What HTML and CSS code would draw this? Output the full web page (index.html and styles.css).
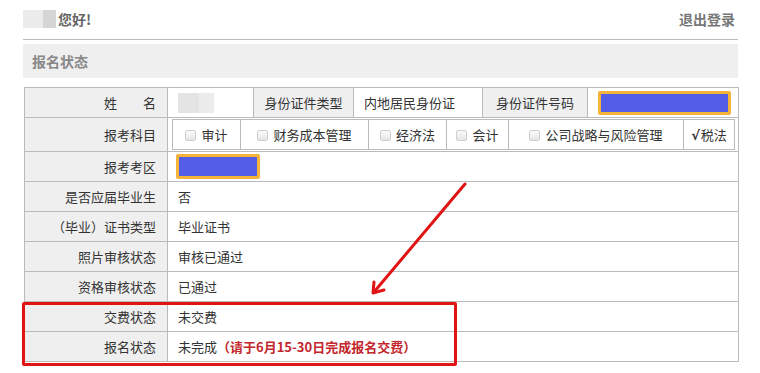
FILE: index.html
```html
<!DOCTYPE html>
<html lang="zh-CN">
<head>
<meta charset="utf-8">
<title>报名状态</title>
<link rel="stylesheet" href="styles.css">
</head>
<body>
<div class="page">
  <div class="top">
    <div class="greet"><span class="blur-a"></span><span class="blur-b"></span><span class="hello">您好!</span></div>
    <a class="logout">退出登录</a>
  </div>
  <div class="section-title">报名状态</div>
  <table class="info">
    <colgroup>
      <col class="c1"><col class="c2"><col class="c3"><col class="c4"><col class="c5"><col class="c6">
    </colgroup>
    <tr class="r1">
      <td class="lab">姓&emsp;&emsp;名</td>
      <td class="val"><span class="nameblur"><span></span><span></span></span></td>
      <td class="sub">身份证件类型</td>
      <td class="val">内地居民身份证</td>
      <td class="sub">身份证件号码</td>
      <td class="val idcell"><span class="mask mask-id"></span></td>
    </tr>
    <tr class="r2">
      <td class="lab">报考科目</td>
      <td class="nest" colspan="5">
        <table class="subjects">
          <colgroup>
            <col class="s1"><col class="s2"><col class="s3"><col class="s4"><col class="s5"><col class="s6">
          </colgroup>
          <tr>
            <td><span class="cb"></span>审计</td>
            <td><span class="cb"></span>财务成本管理</td>
            <td><span class="cb"></span>经济法</td>
            <td><span class="cb"></span>会计</td>
            <td><span class="cb"></span>公司战略与风险管理</td>
            <td><span class="tick">√</span>税法</td>
          </tr>
        </table>
      </td>
    </tr>
    <tr>
      <td class="lab">报考考区</td>
      <td class="val" colspan="5"><span class="mask mask-area"></span></td>
    </tr>
    <tr>
      <td class="lab">是否应届毕业生</td>
      <td class="val" colspan="5">否</td>
    </tr>
    <tr>
      <td class="lab">（毕业）证书类型</td>
      <td class="val" colspan="5">毕业证书</td>
    </tr>
    <tr>
      <td class="lab">照片审核状态</td>
      <td class="val" colspan="5">审核已通过</td>
    </tr>
    <tr>
      <td class="lab">资格审核状态</td>
      <td class="val" colspan="5">已通过</td>
    </tr>
    <tr>
      <td class="lab">交费状态</td>
      <td class="val" colspan="5">未交费</td>
    </tr>
    <tr>
      <td class="lab">报名状态</td>
      <td class="val" colspan="5">未完成<span class="warn">（请于6月15-30日完成报名交费）</span></td>
    </tr>
  </table>
</div>
<div class="highlight"></div>
<svg class="arrow" width="760" height="373" viewBox="0 0 760 373">
  <line x1="465" y1="184" x2="374" y2="292" stroke="#e01414" stroke-width="3" stroke-linecap="round"/>
  <polyline points="374,282 373,293 384,290" fill="none" stroke="#e01414" stroke-width="3" stroke-linecap="round" stroke-linejoin="round"/>
</svg>
</body>
</html>
```
FILE: styles.css
```css
* { box-sizing: border-box; }
html, body { margin: 0; padding: 0; background: #fff; }
body {
  position: relative;
  width: 760px;
  height: 373px;
  overflow: hidden;
  font-family: "Noto Sans CJK SC", "Microsoft YaHei", sans-serif;
  font-size: 13px;
  color: #333;
}
.page { padding: 0 22px 0 23px; }
.top {
  height: 40px;
  display: flex;
  align-items: center;
  justify-content: space-between;
  border-bottom: 1px solid #bcbcbc;
  padding-bottom: 1px;
}
.greet { display: flex; align-items: center; }
.blur-a { display: inline-block; width: 20px; height: 18px; background: #ececec; }
.blur-b { display: inline-block; width: 13px; height: 18px; background: #d6d6d6; }
.hello { margin-left: 2px; font-weight: bold; color: #666; font-size: 14px; }
.logout { font-weight: bold; color: #777; font-size: 14px; margin-right: 3px; }
.section-title {
  margin-top: 4px;
  height: 34px;
  line-height: 34px;
  background: #efefef;
  padding-left: 9px;
  color: #888;
  font-weight: bold;
  font-size: 14px;
}
.info {
  margin-top: 9px;
  margin-left: 1px;
  width: 714px;
  border-collapse: collapse;
  table-layout: fixed;
}
.c1 { width: 143px; } .c2 { width: 86px; } .c3 { width: 100px; }
.c4 { width: 129px; } .c5 { width: 105px; } .c6 { width: 151px; }
.info > tbody > tr > td, .info > tr > td {
  border: 1px solid #bbb;
  height: 30px;
  padding: 0;
  white-space: nowrap;
}
.info .r1 > td { height: 30px; }
.lab {
  background: #efefef;
  text-align: right;
  padding-right: 11px !important;
}
.sub { background: #efefef; text-align: center; }
.val { padding-left: 10px !important; }
.idcell { padding-left: 10px !important; }
.nameblur { display: inline-flex; vertical-align: middle; }
.nameblur span { display: inline-block; height: 20px; }
.nameblur span:first-child { width: 21px; background: #e4e4e4; }
.nameblur span:last-child { width: 15px; background: #ececec; }
.mask {
  display: inline-block;
  vertical-align: middle;
  background: #535ee6;
  border: 3px solid #f6b33a;
  border-radius: 2px;
}
.mask-id { width: 133px; height: 24px; }
.mask-area { width: 84px; height: 25px; margin-left: -2px; }
.info .r2 > td { height: 33px; }
.nest { padding: 1px 4px 1px 4px !important; }
.subjects {
  width: 562px;
  border-collapse: collapse;
  table-layout: fixed;
}
.s1 { width: 68px; } .s2 { width: 128px; } .s3 { width: 78px; }
.s4 { width: 62px; } .s5 { width: 175px; } .s6 { width: 51px; }
.subjects td {
  border: 1px solid #bbb;
  height: 30px;
  text-align: center;
  padding: 0;
  white-space: nowrap;
}
.cb {
  display: inline-block;
  width: 11px;
  height: 11px;
  border: 1px solid #cfcfcf;
  border-radius: 2px;
  background: linear-gradient(#fafafa, #e6e6e6);
  margin-right: 5px;
  vertical-align: -1px;
}
.tick { font-family: "DejaVu Sans", sans-serif; font-weight: bold; font-size: 13px; margin-right: 1px; }
.warn { color: #c3262c; font-weight: bold; }
.highlight {
  position: absolute;
  left: 22px;
  top: 302px;
  width: 435px;
  height: 64px;
  border: 3px solid #e01414;
  border-radius: 2px;
}
.arrow { position: absolute; left: 0; top: 0; }
```
